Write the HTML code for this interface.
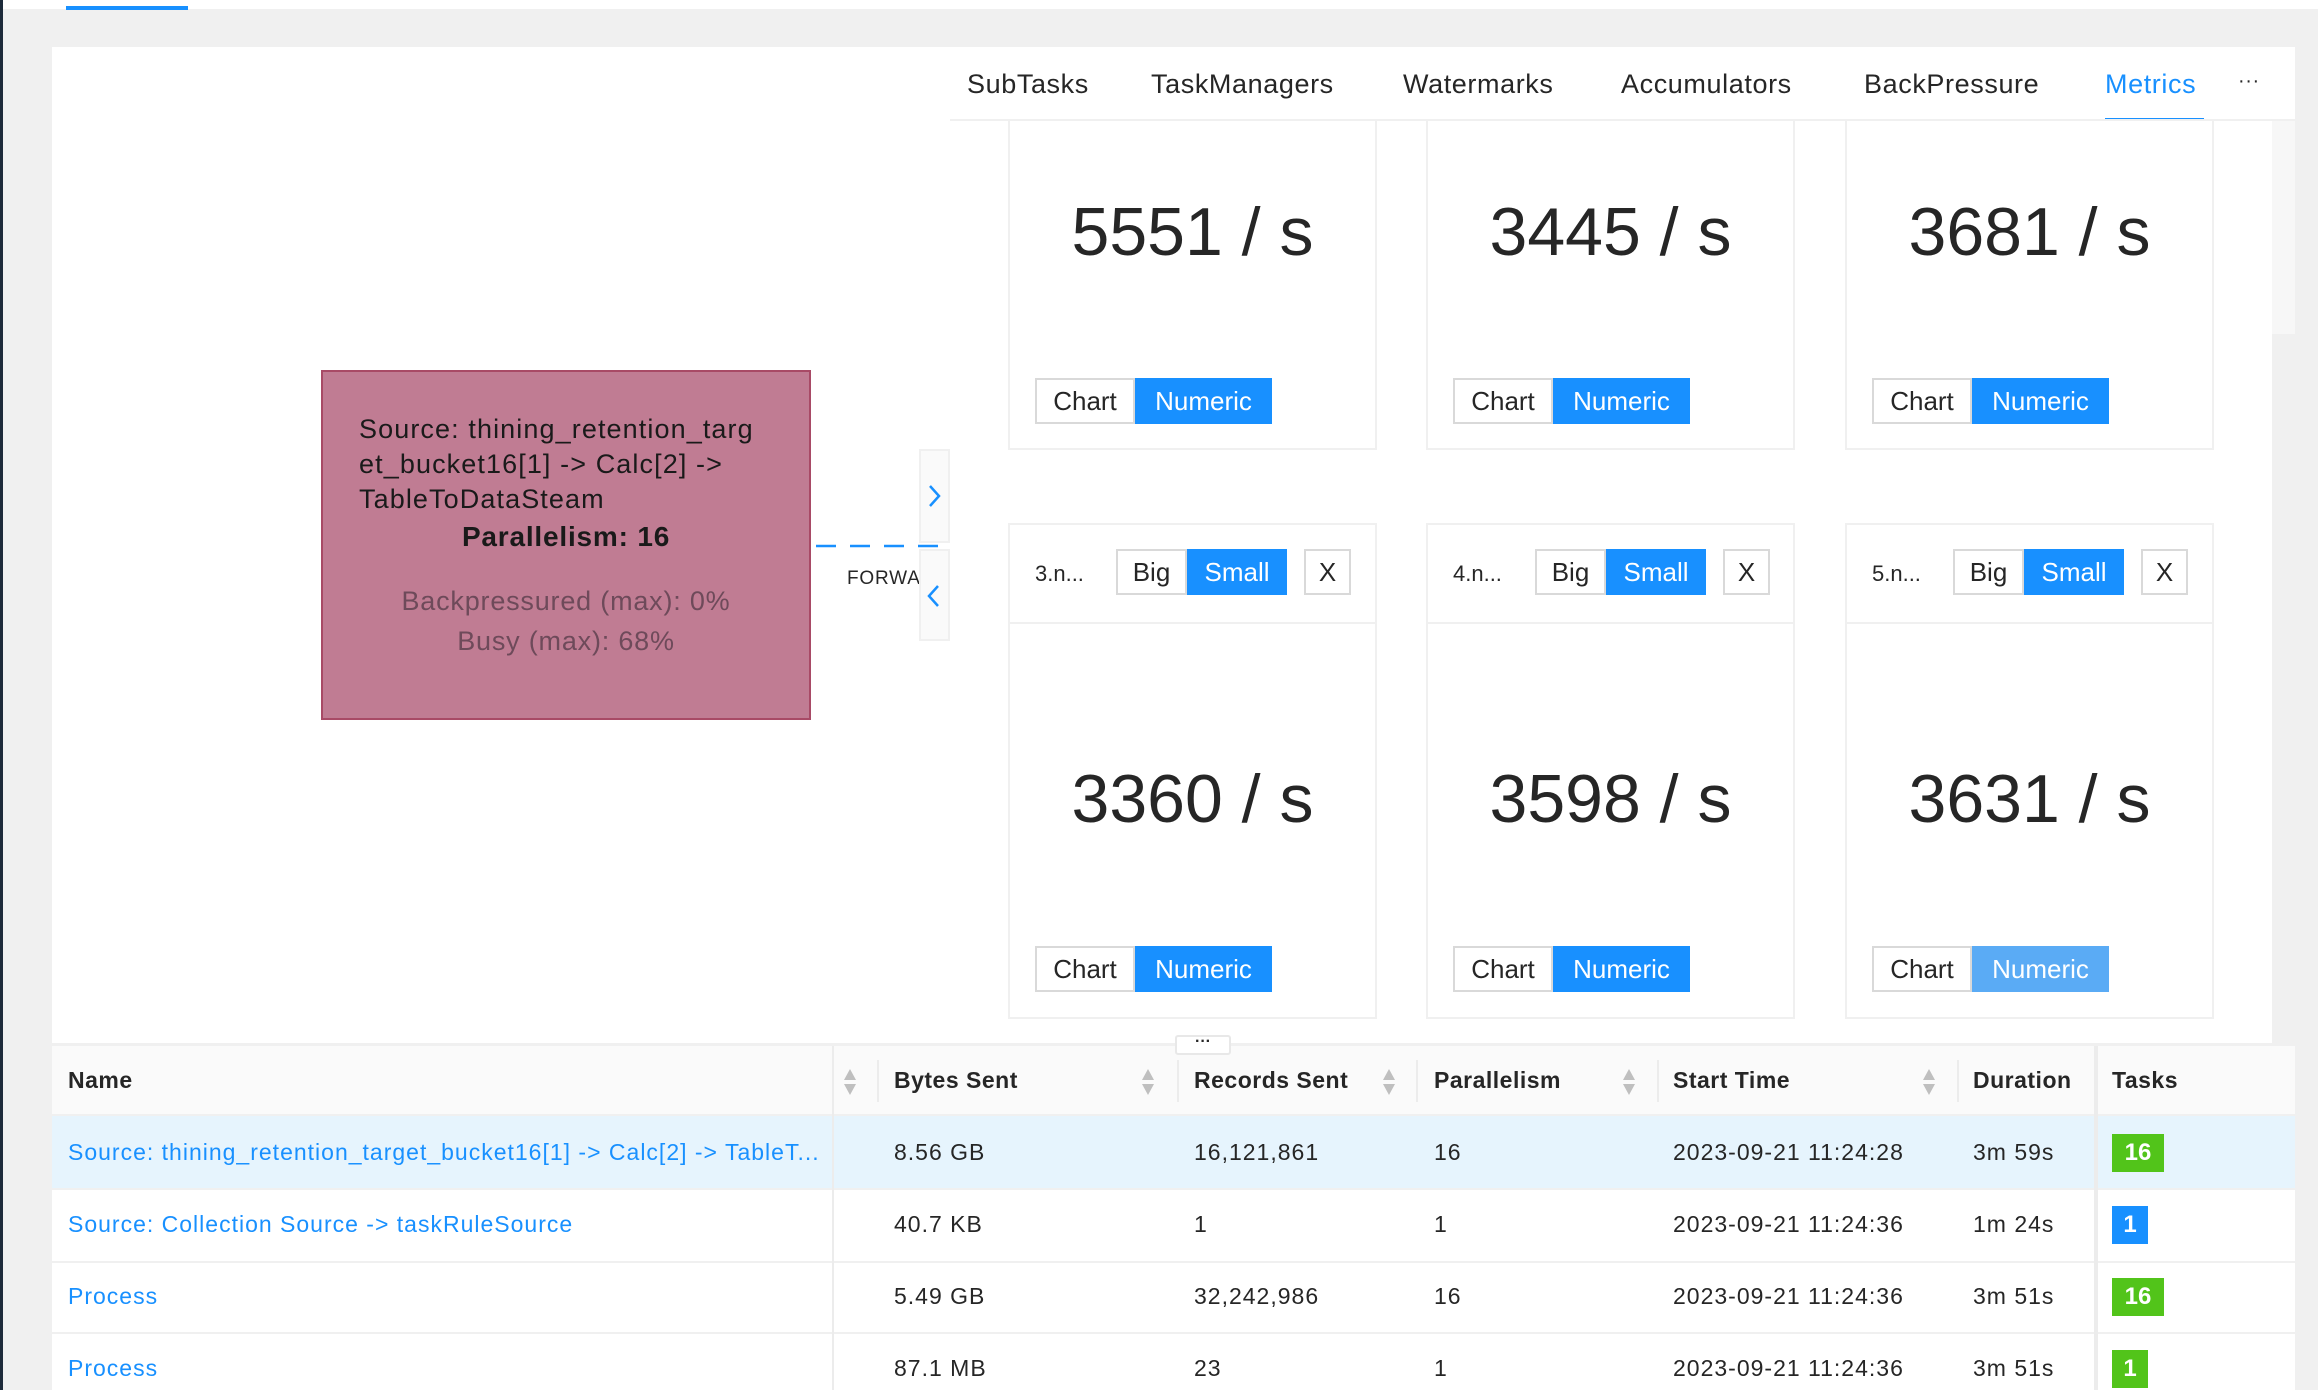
<!DOCTYPE html>
<html><head><meta charset="utf-8"><style>
*{box-sizing:border-box;margin:0;padding:0}
body{width:2318px;height:1390px;overflow:hidden;background:#f0f0f0;font-family:"Liberation Sans",Helvetica,Arial,sans-serif;color:#262626;position:relative}
.a{position:absolute}
.tab{position:absolute;top:69px;font-size:27px;letter-spacing:0.6px;color:#262626;white-space:nowrap}
.card{position:absolute;background:#fff;border:2px solid #f0f0f0}
.val{position:absolute;left:0;right:0;text-align:center;font-size:68px;color:#262626}
.bg{position:absolute;display:flex;height:46px;font-size:26px}
.bg span{display:flex;align-items:center;justify-content:center;height:46px;border:2px solid #d9d9d9;background:#fff;color:#262626}
.bg span.on{background:#1890ff;border-color:#1890ff;color:#fff}
.th{position:absolute;top:1067px;font-size:23px;letter-spacing:0.5px;color:#262626;font-weight:bold}
.td{position:absolute;font-size:23px;letter-spacing:1px;color:#262626;white-space:nowrap}
.lk{color:#1890ff}
.sort{position:absolute;top:1068px;width:14px;height:28px}
.badge{position:absolute;color:#fff;font-weight:bold;font-size:24px;display:flex;align-items:center;justify-content:center;height:38px}
</style></head><body>
<div class="a" style="left:0;top:0;width:2318px;height:9px;background:#fff"></div>
<div class="a" style="left:66px;top:6px;width:122px;height:4px;background:#1890ff"></div>
<div class="a" style="left:0;top:0;width:3px;height:1390px;background:#1d2a3a"></div>

<div class="a" style="left:52px;top:47px;width:898px;height:996px;background:#fff"></div>
<div class="a" style="left:321px;top:370px;width:490px;height:350px;background:#c07c93;border:2px solid #a84a66"></div>
<div class="a" style="left:359px;top:412px;font-size:27px;letter-spacing:1.1px;line-height:35px;color:#1a1a1a">Source: thining_retention_targ<br>et_bucket16[1] -&gt; Calc[2] -&gt;<br>TableToDataSteam</div>
<div class="a" style="left:321px;width:490px;top:521px;text-align:center;font-size:28px;letter-spacing:0.8px;font-weight:bold;color:#1a1a1a">Parallelism: 16</div>
<div class="a" style="left:321px;width:490px;top:581px;text-align:center;font-size:27px;letter-spacing:0.8px;line-height:40px;color:#6e4a5a">Backpressured (max): 0%<br>Busy (max): 68%</div>
<svg class="a" style="left:816px;top:544px" width="134" height="4"><line x1="0" y1="2" x2="134" y2="2" stroke="#1890ff" stroke-width="2.5" stroke-dasharray="20 14"/></svg>
<div class="a" style="left:847px;top:568px;font-size:19px;letter-spacing:0.8px;color:#262626">FORWA</div>
<div class="a" style="left:919px;top:449px;width:31px;height:94px;background:#fafafa;border:2px solid #f0f0f0"></div>
<div class="a" style="left:919px;top:549px;width:31px;height:92px;background:#fafafa;border:2px solid #f0f0f0"></div>
<svg class="a" style="left:922px;top:481px" width="24" height="30"><path d="M8 5 L17 15 L8 25" fill="none" stroke="#1890ff" stroke-width="2.5"/></svg>
<svg class="a" style="left:922px;top:581px" width="24" height="30"><path d="M16 5 L7 15 L16 25" fill="none" stroke="#1890ff" stroke-width="2.5"/></svg>

<div class="a" style="left:950px;top:47px;width:1345px;height:74px;background:#fff;border-bottom:2px solid #f0f0f0"></div>
<div class="tab" style="left:967px">SubTasks</div>
<div class="tab" style="left:1151px">TaskManagers</div>
<div class="tab" style="left:1403px">Watermarks</div>
<div class="tab" style="left:1621px">Accumulators</div>
<div class="tab" style="left:1864px">BackPressure</div>
<div class="tab" style="left:2105px;color:#1890ff">Metrics</div>
<div class="a" style="left:2105px;top:118px;width:99px;height:5px;background:#1890ff"></div>
<div class="tab" style="left:2238px;top:70px;font-size:20px">···</div>

<div class="a" style="left:950px;top:121px;width:1322px;height:922px;background:#fff"></div>
<div class="a" style="left:2272px;top:121px;width:23px;height:213px;background:#f7f7f7"></div>

<div class="card" style="left:1008px;top:119px;width:369px;height:331px"><div class="val" style="top:72px">5551 / s</div></div>
<div class="card" style="left:1426px;top:119px;width:369px;height:331px"><div class="val" style="top:72px">3445 / s</div></div>
<div class="card" style="left:1845px;top:119px;width:369px;height:331px"><div class="val" style="top:72px">3681 / s</div></div>
<div class="bg" style="left:1035px;top:378px"><span style="width:100px">Chart</span><span class="on" style="width:137px">Numeric</span></div>
<div class="bg" style="left:1453px;top:378px"><span style="width:100px">Chart</span><span class="on" style="width:137px">Numeric</span></div>
<div class="bg" style="left:1872px;top:378px"><span style="width:100px">Chart</span><span class="on" style="width:137px">Numeric</span></div>

<div class="card" style="left:1008px;top:523px;width:369px;height:496px"><div class="a" style="left:0;right:0;top:97px;border-top:2px solid #f0f0f0"></div><div class="val" style="top:235px">3360 / s</div><div class="a" style="left:25px;top:36px;font-size:22px">3.n...</div></div>
<div class="card" style="left:1426px;top:523px;width:369px;height:496px"><div class="a" style="left:0;right:0;top:97px;border-top:2px solid #f0f0f0"></div><div class="val" style="top:235px">3598 / s</div><div class="a" style="left:25px;top:36px;font-size:22px">4.n...</div></div>
<div class="card" style="left:1845px;top:523px;width:369px;height:496px"><div class="a" style="left:0;right:0;top:97px;border-top:2px solid #f0f0f0"></div><div class="val" style="top:235px">3631 / s</div><div class="a" style="left:25px;top:36px;font-size:22px">5.n...</div></div>
<div class="bg" style="left:1116px;top:549px"><span style="width:71px">Big</span><span class="on" style="width:100px">Small</span></div>
<div class="bg" style="left:1304px;top:549px"><span style="width:47px">X</span></div>
<div class="bg" style="left:1535px;top:549px"><span style="width:71px">Big</span><span class="on" style="width:100px">Small</span></div>
<div class="bg" style="left:1723px;top:549px"><span style="width:47px">X</span></div>
<div class="bg" style="left:1953px;top:549px"><span style="width:71px">Big</span><span class="on" style="width:100px">Small</span></div>
<div class="bg" style="left:2141px;top:549px"><span style="width:47px">X</span></div>
<div class="bg" style="left:1035px;top:946px"><span style="width:100px">Chart</span><span class="on" style="width:137px">Numeric</span></div>
<div class="bg" style="left:1453px;top:946px"><span style="width:100px">Chart</span><span class="on" style="width:137px">Numeric</span></div>
<div class="bg" style="left:1872px;top:946px"><span style="width:100px">Chart</span><span class="on" style="width:137px;background:#5aabf5;border-color:#5aabf5">Numeric</span></div>

<div class="a" style="left:52px;top:1046px;width:2243px;height:344px;background:#fff"></div>
<div class="a" style="left:52px;top:1046px;width:2243px;height:70px;background:#fafafa;border-bottom:2px solid #f0f0f0"></div>
<div class="a" style="left:52px;top:1116px;width:2243px;height:72px;background:#e6f4fd"></div>
<div class="a" style="left:52px;top:1188px;width:2243px;border-top:2px solid #f0f0f0"></div>
<div class="a" style="left:52px;top:1261px;width:2243px;border-top:2px solid #f0f0f0"></div>
<div class="a" style="left:52px;top:1332px;width:2243px;border-top:2px solid #f0f0f0"></div>
<div class="a" style="left:832px;top:1046px;width:2px;height:344px;background:#ececec"></div>
<div class="a" style="left:2094px;top:1046px;width:4px;height:344px;background:#ececec"></div>
<div class="a" style="left:877px;top:1060px;width:2px;height:42px;background:#ececec"></div>
<div class="a" style="left:1177px;top:1060px;width:2px;height:42px;background:#ececec"></div>
<div class="a" style="left:1416px;top:1060px;width:2px;height:42px;background:#ececec"></div>
<div class="a" style="left:1657px;top:1060px;width:2px;height:42px;background:#ececec"></div>
<div class="a" style="left:1957px;top:1060px;width:2px;height:42px;background:#ececec"></div>
<div class="a" style="left:1175px;top:1035px;width:56px;height:20px;background:#fff;border:2px solid #e8e8e8;border-radius:3px;font-size:16px;font-weight:bold;text-align:center;line-height:10px">···</div>

<div class="th" style="left:68px">Name</div>
<div class="th" style="left:894px">Bytes Sent</div>
<div class="th" style="left:1194px">Records Sent</div>
<div class="th" style="left:1434px">Parallelism</div>
<div class="th" style="left:1673px">Start Time</div>
<div class="th" style="left:1973px">Duration</div>
<div class="th" style="left:2112px">Tasks</div>
<svg class="sort" style="left:843px" viewBox="0 0 14 28"><path d="M7 1 L13 12 H1Z M7 27 L13 16 H1Z" fill="#bfbfbf"/></svg>
<svg class="sort" style="left:1141px" viewBox="0 0 14 28"><path d="M7 1 L13 12 H1Z M7 27 L13 16 H1Z" fill="#bfbfbf"/></svg>
<svg class="sort" style="left:1382px" viewBox="0 0 14 28"><path d="M7 1 L13 12 H1Z M7 27 L13 16 H1Z" fill="#bfbfbf"/></svg>
<svg class="sort" style="left:1622px" viewBox="0 0 14 28"><path d="M7 1 L13 12 H1Z M7 27 L13 16 H1Z" fill="#bfbfbf"/></svg>
<svg class="sort" style="left:1922px" viewBox="0 0 14 28"><path d="M7 1 L13 12 H1Z M7 27 L13 16 H1Z" fill="#bfbfbf"/></svg>

<div class="td lk" style="left:68px;top:1139px">Source: thining_retention_target_bucket16[1] -&gt; Calc[2] -&gt; TableT...</div>
<div class="td" style="left:894px;top:1139px">8.56 GB</div>
<div class="td" style="left:1194px;top:1139px">16,121,861</div>
<div class="td" style="left:1434px;top:1139px">16</div>
<div class="td" style="left:1673px;top:1139px">2023-09-21 11:24:28</div>
<div class="td" style="left:1973px;top:1139px">3m 59s</div>
<div class="badge" style="left:2112px;top:1134px;width:52px;background:#52c41a">16</div>

<div class="td lk" style="left:68px;top:1211px">Source: Collection Source -&gt; taskRuleSource</div>
<div class="td" style="left:894px;top:1211px">40.7 KB</div>
<div class="td" style="left:1194px;top:1211px">1</div>
<div class="td" style="left:1434px;top:1211px">1</div>
<div class="td" style="left:1673px;top:1211px">2023-09-21 11:24:36</div>
<div class="td" style="left:1973px;top:1211px">1m 24s</div>
<div class="badge" style="left:2112px;top:1206px;width:36px;background:#1890ff">1</div>

<div class="td lk" style="left:68px;top:1283px">Process</div>
<div class="td" style="left:894px;top:1283px">5.49 GB</div>
<div class="td" style="left:1194px;top:1283px">32,242,986</div>
<div class="td" style="left:1434px;top:1283px">16</div>
<div class="td" style="left:1673px;top:1283px">2023-09-21 11:24:36</div>
<div class="td" style="left:1973px;top:1283px">3m 51s</div>
<div class="badge" style="left:2112px;top:1278px;width:52px;background:#52c41a">16</div>

<div class="td lk" style="left:68px;top:1355px">Process</div>
<div class="td" style="left:894px;top:1355px">87.1 MB</div>
<div class="td" style="left:1194px;top:1355px">23</div>
<div class="td" style="left:1434px;top:1355px">1</div>
<div class="td" style="left:1673px;top:1355px">2023-09-21 11:24:36</div>
<div class="td" style="left:1973px;top:1355px">3m 51s</div>
<div class="badge" style="left:2112px;top:1350px;width:36px;background:#52c41a">1</div>
</body></html>
